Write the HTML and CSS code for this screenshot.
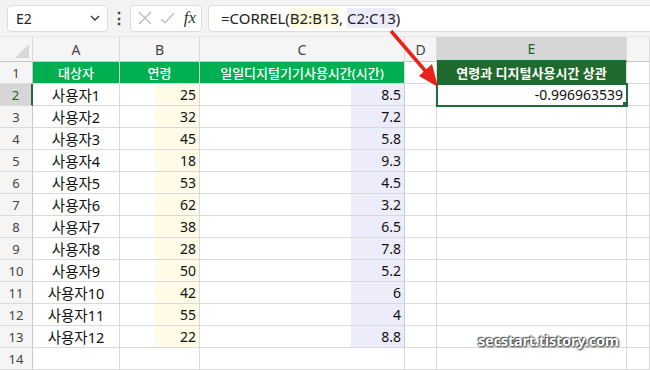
FILE: index.html
```html
<!DOCTYPE html>
<html>
<head>
  <meta charset="utf-8" />
  <title>CORREL</title>
  <link rel="stylesheet" href="styles.css">
</head>
<body>

<div class="bar">
  <div class="namebox">
    <span>E2</span>
    <svg width="12" height="8" viewBox="0 0 12 8"><path d="M2 2 L6 6 L10 2" fill="none" stroke="#333" stroke-width="1.3"/></svg>
  </div>
  <div class="dots">&#8942;</div>
  <div class="fxbox">
    <svg width="14" height="14" viewBox="0 0 14 14"><path d="M1 1 L13 13 M13 1 L1 13" stroke="#b8b8b8" stroke-width="1.2"/></svg>
    <svg width="15" height="13" viewBox="0 0 15 13"><path d="M1 7 L5 11 L14 1" fill="none" stroke="#b8b8b8" stroke-width="1.2"/></svg>
    <span class="fx">fx</span>
  </div>
  <div class="formula"><span>=CORREL(<span class="rb">B2:B13</span>, <span class="rc">C2:C13</span>)</span></div>
</div>

<div class="sheet">
  <div class="corner"><svg width="14" height="14" viewBox="0 0 14 14"><polygon points="14,0 14,14 0,14" fill="#d7d7d7"/></svg></div>
  <div class="colhead">A</div>
  <div class="colhead">B</div>
  <div class="colhead">C</div>
  <div class="colhead">D</div>
  <div class="colhead active">E</div>
  <div class="colhead"></div>

  <div class="rowhead">1</div>
  <div class="cell head">대상자</div>
  <div class="cell head">연령</div>
  <div class="cell head">일일디지털기기사용시간(시간)</div>
  <div class="cell"></div>
  <div class="cell head dark">연령과 디지털사용시간 상관</div>
  <div class="cell"></div>

  <div class="rowhead active">2</div>
  <div class="cell name">사용자1</div>
  <div class="cell num hb">25</div>
  <div class="cell num hc">8.5</div>
  <div class="cell"></div>
  <div class="cell num sel">-0.996963539</div>
  <div class="cell"></div>

  <div class="rowhead">3</div>
  <div class="cell name">사용자2</div>
  <div class="cell num hb">32</div>
  <div class="cell num hc">7.2</div>
  <div class="cell"></div><div class="cell"></div><div class="cell"></div>

  <div class="rowhead">4</div>
  <div class="cell name">사용자3</div>
  <div class="cell num hb">45</div>
  <div class="cell num hc">5.8</div>
  <div class="cell"></div><div class="cell"></div><div class="cell"></div>

  <div class="rowhead">5</div>
  <div class="cell name">사용자4</div>
  <div class="cell num hb">18</div>
  <div class="cell num hc">9.3</div>
  <div class="cell"></div><div class="cell"></div><div class="cell"></div>

  <div class="rowhead">6</div>
  <div class="cell name">사용자5</div>
  <div class="cell num hb">53</div>
  <div class="cell num hc">4.5</div>
  <div class="cell"></div><div class="cell"></div><div class="cell"></div>

  <div class="rowhead">7</div>
  <div class="cell name">사용자6</div>
  <div class="cell num hb">62</div>
  <div class="cell num hc">3.2</div>
  <div class="cell"></div><div class="cell"></div><div class="cell"></div>

  <div class="rowhead">8</div>
  <div class="cell name">사용자7</div>
  <div class="cell num hb">38</div>
  <div class="cell num hc">6.5</div>
  <div class="cell"></div><div class="cell"></div><div class="cell"></div>

  <div class="rowhead">9</div>
  <div class="cell name">사용자8</div>
  <div class="cell num hb">28</div>
  <div class="cell num hc">7.8</div>
  <div class="cell"></div><div class="cell"></div><div class="cell"></div>

  <div class="rowhead">10</div>
  <div class="cell name">사용자9</div>
  <div class="cell num hb">50</div>
  <div class="cell num hc">5.2</div>
  <div class="cell"></div><div class="cell"></div><div class="cell"></div>

  <div class="rowhead">11</div>
  <div class="cell name">사용자10</div>
  <div class="cell num hb">42</div>
  <div class="cell num hc">6</div>
  <div class="cell"></div><div class="cell"></div><div class="cell"></div>

  <div class="rowhead">12</div>
  <div class="cell name">사용자11</div>
  <div class="cell num hb">55</div>
  <div class="cell num hc">4</div>
  <div class="cell"></div><div class="cell"></div><div class="cell"></div>

  <div class="rowhead">13</div>
  <div class="cell name">사용자12</div>
  <div class="cell num hb">22</div>
  <div class="cell num hc">8.8</div>
  <div class="cell"></div><div class="cell"></div><div class="cell"></div>

  <div class="rowhead">14</div>
  <div class="cell"></div><div class="cell"></div><div class="cell"></div>
  <div class="cell"></div><div class="cell"></div><div class="cell"></div>
</div>

<svg class="arrow" width="650" height="370" viewBox="0 0 650 370">
  <line x1="391" y1="31" x2="428" y2="74" stroke="#e8231c" stroke-width="3.5"/>
  <polygon points="438,87 419,76 432,64" fill="#e8231c"/>
</svg>

<div class="mark">secstart.tistory.com</div>

</body>
</html>
```

FILE: styles.css
```css
html, body {
  margin: 0;
  padding: 0;
}
body {
  width: 650px;
  height: 370px;
  overflow: hidden;
  background: #fff;
  color: #222;
  font-family: "Noto Sans", "Noto Sans CJK KR", sans-serif;
  position: relative;
}
.bar {
  display: flex;
  align-items: center;
  height: 37px;
  padding-left: 7px;
  background: #f3f3f3;
  box-sizing: border-box;
  border-bottom: 1px solid #e6e6e6;
}
.namebox, .fxbox, .formula {
  height: 27px;
  box-sizing: border-box;
  background: #fff;
  border: 1px solid #dcdcdc;
  border-radius: 4px;
  display: flex;
  align-items: center;
}
.namebox {
  width: 101px;
  padding: 0 6px 0 8px;
  justify-content: space-between;
  font-size: 14px;
}
.dots {
  width: 22px;
  text-align: center;
  font-size: 16px;
  font-weight: bold;
  color: #444;
}
.fxbox {
  width: 72px;
  padding: 0 5px 0 7px;
  justify-content: space-between;
}
.fx {
  font-family: "Liberation Serif", serif;
  font-style: italic;
  font-size: 17px;
  color: #333;
}
.formula {
  margin-left: 6px;
  flex: 1;
  border-right: none;
  border-radius: 4px 0 0 4px;
  padding-left: 12px;
  font-size: 15px;
  color: #222;
  white-space: pre;
}
.rb { background: #fffbe0; }
.rc { background: #ebebfa; }

.sheet {
  display: grid;
  grid-template-columns: 33px 87px 80px 205px 32px 190px 1fr;
  grid-template-rows: 25px;
  grid-auto-rows: 22px;
}
.corner, .colhead, .rowhead {
  background: #f5f5f5;
  color: #444;
  font-size: 14px;
  box-sizing: border-box;
  border-right: 1px solid #dadada;
  border-bottom: 1px solid #c8c8c8;
  display: flex;
  align-items: center;
  justify-content: center;
}
.corner {
  align-items: flex-end;
  justify-content: flex-end;
  padding: 0 3px 3px 0;
}
.rowhead {
  font-size: 13px;
  border-bottom: 1px solid #dadada;
  border-right: 1px solid #c8c8c8;
}
.colhead.active {
  background: #d6d6d6;
  color: #1b5e33;
  border-bottom: 2px solid #1d6b36;
}
.rowhead.active {
  background: #d6d6d6;
  color: #1b5e33;
  border-right: 2px solid #1d6b36;
}
.cell {
  box-sizing: border-box;
  border-right: 1px solid #d9d9d9;
  border-bottom: 1px solid #d9d9d9;
  font-size: 14px;
  color: #111;
  display: flex;
  align-items: center;
  white-space: nowrap;
  overflow: hidden;
}
.head {
  background: #00b050;
  color: #fff;
  font-size: 13px;
  justify-content: center;
  font-weight: 500;
}
.head.dark {
  background: #1f6a2c;
  font-weight: bold;
  font-size: 13px;
}
.name {
  justify-content: center;
  font-size: 14.5px;
}
.num {
  justify-content: flex-end;
  padding-right: 3px;
  font-size: 14px;
}
.hb {
  background: linear-gradient(to right, #fff 35px, #fffbe6 35px);
}
.hc {
  background: linear-gradient(to right, #fff 151px, #ececfa 151px);
  border-right-color: #c9c9e0;
}
.sel {
  position: relative;
  outline: 2px solid #1d6b36;
  outline-offset: -1px;
}
.sel::after {
  content: "";
  position: absolute;
  right: -4px;
  bottom: -4px;
  width: 6px;
  height: 6px;
  background: #1d6b36;
  border: 1px solid #fff;
}
.arrow {
  position: absolute;
  left: 0;
  top: 0;
}
.mark {
  position: absolute;
  left: 478px;
  top: 330px;
  font-size: 14.5px;
  font-weight: bold;
  color: #fff;
  letter-spacing: -0.2px;
  text-shadow: 0 0 2px #333, 1px 1px 2px #333, -1px -1px 1px #555;
}
```
